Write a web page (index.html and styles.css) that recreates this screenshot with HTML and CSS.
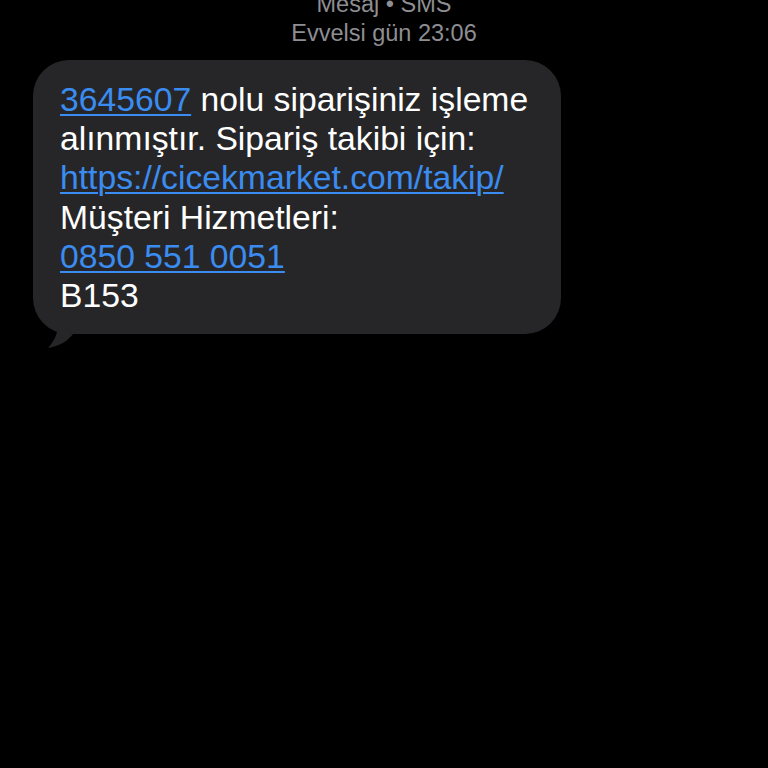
FILE: index.html
```html
<!DOCTYPE html>
<html lang="tr">
<head>
  <meta charset="UTF-8" />
  <meta name="viewport" content="width=device-width, initial-scale=1" />
  <title>Mesaj</title>
  <link rel="stylesheet" href="styles.css">
</head>
<body>
  <div class="meta">
    <div class="meta-line">Mesaj • SMS</div>
    <div class="meta-line">Evvelsi gün 23:06</div>
  </div>

  <div class="thread">
    <div class="bubble">
      <p class="text">
        <a href="#">3645607</a> nolu siparişiniz işleme<br>
        alınmıştır. Sipariş takibi için:<br>
        <a href="#">https://cicekmarket.com/takip/</a><br>
        Müşteri Hizmetleri:<br>
        <a href="#">0850 551 0051</a><br>
        B153
      </p>
      <svg class="tail" width="30" height="26" viewBox="0 0 30 26">
        <path d="M12 0 C14 10 10 18 3 26 C14 24 22 20 28 12 Z" fill="#262628"/>
      </svg>
    </div>
  </div>
</body>
</html>
```

FILE: styles.css
```css
body {
  margin: 0;
  background-color: #000;
  font-family: "Liberation Sans", Arial, sans-serif;
  color: #fff;
  height: 768px;
  overflow: hidden;
}
.meta {
  margin-top: -10px;
  text-align: center;
  color: #8e8e93;
  font-size: 23.5px;
  line-height: 29px;
}
.thread {
  padding: 12px 0 0 33px;
}
.bubble {
  position: relative;
  width: 528px;
  box-sizing: border-box;
  background-color: #262628;
  border-radius: 36px;
  padding: 20px 20px 19px 27px;
}
.text {
  margin: 0;
  font-size: 33.7px;
  line-height: 39.2px;
  white-space: nowrap;
}
.text a {
  color: #3b8cf0;
  text-decoration: underline;
  text-decoration-thickness: 2px;
  text-underline-offset: 3px;
}
.tail {
  position: absolute;
  left: 12px;
  bottom: -14px;
}
```
